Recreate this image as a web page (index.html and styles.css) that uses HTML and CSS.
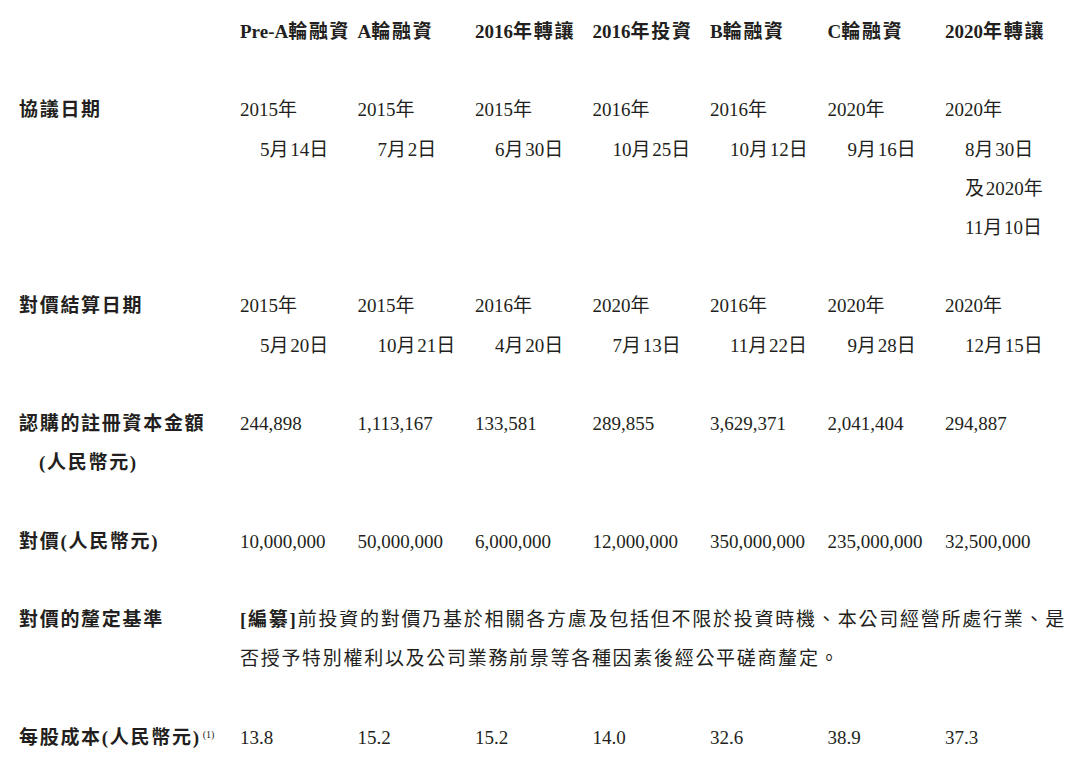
FILE: index.html
```html
<!DOCTYPE html>
<html lang="zh-Hant">
<head>
<meta charset="utf-8">
<title>投資詳情</title>
<link rel="stylesheet" href="styles.css">
</head>
<body>
<div class="sheet">
  <div class="label"></div>
  <div class="head"><span class="n">Pre-A</span>輪融資</div>
  <div class="head"><span class="n">A</span>輪融資</div>
  <div class="head"><span class="n">2016</span>年轉讓</div>
  <div class="head"><span class="n">2016</span>年投資</div>
  <div class="head"><span class="n">B</span>輪融資</div>
  <div class="head"><span class="n">C</span>輪融資</div>
  <div class="head"><span class="n">2020</span>年轉讓</div>

  <div class="label">協議日期</div>
  <div class="cell"><span class="n">2015</span>年<br><span class="n">5</span>月<span class="n">14</span>日</div>
  <div class="cell"><span class="n">2015</span>年<br><span class="n">7</span>月<span class="n">2</span>日</div>
  <div class="cell"><span class="n">2015</span>年<br><span class="n">6</span>月<span class="n">30</span>日</div>
  <div class="cell"><span class="n">2016</span>年<br><span class="n">10</span>月<span class="n">25</span>日</div>
  <div class="cell"><span class="n">2016</span>年<br><span class="n">10</span>月<span class="n">12</span>日</div>
  <div class="cell"><span class="n">2020</span>年<br><span class="n">9</span>月<span class="n">16</span>日</div>
  <div class="cell"><span class="n">2020</span>年<br><span class="n">8</span>月<span class="n">30</span>日<br>及<span class="n">2020</span>年<br><span class="n">11</span>月<span class="n">10</span>日</div>

  <div class="label">對價結算日期</div>
  <div class="cell"><span class="n">2015</span>年<br><span class="n">5</span>月<span class="n">20</span>日</div>
  <div class="cell"><span class="n">2015</span>年<br><span class="n">10</span>月<span class="n">21</span>日</div>
  <div class="cell"><span class="n">2016</span>年<br><span class="n">4</span>月<span class="n">20</span>日</div>
  <div class="cell"><span class="n">2020</span>年<br><span class="n">7</span>月<span class="n">13</span>日</div>
  <div class="cell"><span class="n">2016</span>年<br><span class="n">11</span>月<span class="n">22</span>日</div>
  <div class="cell"><span class="n">2020</span>年<br><span class="n">9</span>月<span class="n">28</span>日</div>
  <div class="cell"><span class="n">2020</span>年<br><span class="n">12</span>月<span class="n">15</span>日</div>

  <div class="label">認購的註冊資本金額<br>(人民幣元)</div>
  <div class="cell num">244,898</div>
  <div class="cell num">1,113,167</div>
  <div class="cell num">133,581</div>
  <div class="cell num">289,855</div>
  <div class="cell num">3,629,371</div>
  <div class="cell num">2,041,404</div>
  <div class="cell num">294,887</div>

  <div class="label">對價(人民幣元)</div>
  <div class="cell num">10,000,000</div>
  <div class="cell num">50,000,000</div>
  <div class="cell num">6,000,000</div>
  <div class="cell num">12,000,000</div>
  <div class="cell num">350,000,000</div>
  <div class="cell num">235,000,000</div>
  <div class="cell num">32,500,000</div>

  <div class="label">對價的釐定基準</div>
  <div class="basis"><b class="redact">[編纂]</b>前投資的對價乃基於相關各方慮及包括但不限於投資時機、本公司經營所處行業、是否授予特別權利以及公司業務前景等各種因素後經公平磋商釐定。</div>

  <div class="label">每股成本(人民幣元)<sup class="fn">(1)</sup></div>
  <div class="cell num">13.8</div>
  <div class="cell num">15.2</div>
  <div class="cell num">15.2</div>
  <div class="cell num">14.0</div>
  <div class="cell num">32.6</div>
  <div class="cell num">38.9</div>
  <div class="cell num">37.3</div>
</div>
</body>
</html>
```
FILE: styles.css
```css
html, body {
  margin: 0;
  padding: 0;
  background: #ffffff;
}

body {
  font-family: "Liberation Serif", "Noto Sans CJK TC", serif;
  font-size: 19px;
  color: #231f20;
}

.sheet {
  display: grid;
  grid-template-columns: 221px repeat(7, 117.5px);
  row-gap: 39.2px;
  padding: 12px 0 0 19px;
  line-height: 39.2px;
  letter-spacing: 1.7px;
}

.label {
  font-weight: bold;
  padding-left: 20px;
  text-indent: -20px;
}

.head {
  font-weight: bold;
  white-space: nowrap;
}

.cell {
  padding-left: 20px;
  text-indent: -20px;
  white-space: nowrap;
}

.n,
.num {
  letter-spacing: 0;
}

.basis {
  grid-column: 2 / -1;
  width: 826px;
  text-align: justify;
}

.redact {
  font-weight: bold;
}

.fn {
  font-size: 10px;
  letter-spacing: 0;
  line-height: 0;
  vertical-align: 6px;
  font-weight: normal;
  margin-left: 2px;
}
```
